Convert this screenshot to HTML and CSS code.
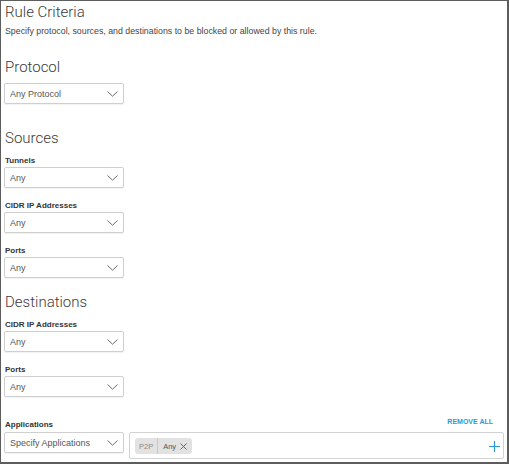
FILE: index.html
```html
<!DOCTYPE html>
<html>
<head>
<meta charset="utf-8">
<link rel="stylesheet" href="styles.css">
</head>
<body>
<div class="frame">
  <h1 class="title">Rule Criteria</h1>
  <p class="desc">Specify protocol, sources, and destinations to be blocked or allowed by this rule.</p>

  <h2 class="section">Protocol</h2>
  <div class="select"><span>Any Protocol</span><svg class="chev" width="11" height="6" viewBox="0 0 11 6"><polyline points="0.5,0.5 5.5,5.2 10.5,0.5" fill="none" stroke="#6a6a6a" stroke-width="1"/></svg></div>

  <h2 class="section sources">Sources</h2>
  <div class="field first">
    <div class="label">Tunnels</div>
    <div class="select"><span>Any</span><svg class="chev" width="11" height="6" viewBox="0 0 11 6"><polyline points="0.5,0.5 5.5,5.2 10.5,0.5" fill="none" stroke="#6a6a6a" stroke-width="1"/></svg></div>
  </div>
  <div class="field">
    <div class="label">CIDR IP Addresses</div>
    <div class="select"><span>Any</span><svg class="chev" width="11" height="6" viewBox="0 0 11 6"><polyline points="0.5,0.5 5.5,5.2 10.5,0.5" fill="none" stroke="#6a6a6a" stroke-width="1"/></svg></div>
  </div>
  <div class="field">
    <div class="label">Ports</div>
    <div class="select"><span>Any</span><svg class="chev" width="11" height="6" viewBox="0 0 11 6"><polyline points="0.5,0.5 5.5,5.2 10.5,0.5" fill="none" stroke="#6a6a6a" stroke-width="1"/></svg></div>
  </div>

  <h2 class="section dest">Destinations</h2>
  <div class="field first">
    <div class="label">CIDR IP Addresses</div>
    <div class="select"><span>Any</span><svg class="chev" width="11" height="6" viewBox="0 0 11 6"><polyline points="0.5,0.5 5.5,5.2 10.5,0.5" fill="none" stroke="#6a6a6a" stroke-width="1"/></svg></div>
  </div>
  <div class="field">
    <div class="label">Ports</div>
    <div class="select"><span>Any</span><svg class="chev" width="11" height="6" viewBox="0 0 11 6"><polyline points="0.5,0.5 5.5,5.2 10.5,0.5" fill="none" stroke="#6a6a6a" stroke-width="1"/></svg></div>
  </div>

  <div class="apps">
    <div class="label apps-label">Applications</div>
    <div class="remove">REMOVE ALL</div>
    <div class="select"><span>Specify Applications</span><svg class="chev" width="11" height="6" viewBox="0 0 11 6"><polyline points="0.5,0.5 5.5,5.2 10.5,0.5" fill="none" stroke="#6a6a6a" stroke-width="1"/></svg></div>
    <div class="tagbox">
      <div class="tag"><span class="tag-key">P2P</span><span class="tag-val">Any<svg class="x" width="7" height="7" viewBox="0 0 7 7"><path d="M0.5 0.5 L6.5 6.5 M6.5 0.5 L0.5 6.5" stroke="#666" stroke-width="1" fill="none"/></svg></span></div>
      <svg class="plus" width="11" height="11" viewBox="0 0 11 11"><path d="M5.5 0 V11 M0 5.5 H11" stroke="#2b9ad4" stroke-width="1.2" fill="none"/></svg>
    </div>
  </div>
</div>
</body>
</html>
```

FILE: styles.css
```css
html, body {
  margin: 0;
  padding: 0;
  background: #ffffff;
}

.frame {
  box-sizing: border-box;
  width: 509px;
  height: 464px;
  border-style: solid;
  border-color: #5d5d5d;
  border-width: 1px 2px 2px 1px;
  padding: 2px 0 0 3px;
  font-family: "Liberation Sans", Arial, sans-serif;
  color: #333;
  overflow: hidden;
}

.title,
.section {
  margin: 0;
  font-family: Roboto, "Liberation Sans", sans-serif;
  font-weight: 300;
  font-size: 15px;
  line-height: 18px;
  color: #3a3a3a;
  padding-left: 1px;
}

.desc {
  margin: 4px 0 0 1px;
  font-size: 8.8px;
  line-height: 12px;
  color: #444;
}

.section {
  margin-top: 21px;
  margin-bottom: 7px;
}

.section.sources {
  margin-top: 25px;
  margin-bottom: 0;
}

.section.dest {
  margin-top: 15px;
  margin-bottom: 0;
}

.field {
  margin-top: 13px;
}

.field.first {
  margin-top: 9px;
}

.label {
  font-size: 8px;
  font-weight: bold;
  line-height: 10px;
  margin-bottom: 1px;
  color: #333;
  padding-left: 1px;
}

.select {
  box-sizing: border-box;
  width: 120px;
  height: 21px;
  border: 1px solid #cfcfcf;
  border-radius: 2px;
  box-shadow: 0 1px 1px rgba(0, 0, 0, 0.06);
  display: flex;
  align-items: center;
  justify-content: space-between;
  padding: 0 5px 0 5px;
  font-size: 9px;
  color: #555;
  background: #fff;
}

.chev {
  display: block;
}

.apps {
  margin-top: 20px;
  display: grid;
  grid-template-columns: 120px 1fr;
  column-gap: 5px;
  row-gap: 2px;
  padding-right: 3px;
  align-items: end;
}

.apps-label {
  margin-bottom: 0;
}

.remove {
  justify-self: end;
  font-size: 7px;
  font-weight: bold;
  line-height: 10px;
  color: #2a9ad6;
  padding-right: 11px;
  margin-bottom: 3px;
}

.apps .select {
  align-self: start;
}

.tagbox {
  align-self: start;
  box-sizing: border-box;
  height: 27px;
  border: 1px solid #d2d2d2;
  border-radius: 2px;
  display: flex;
  align-items: center;
  justify-content: space-between;
  padding: 0 3px 0 5px;
}

.tag {
  display: flex;
  align-items: stretch;
  height: 16px;
  background: #e2e2e2;
  border-radius: 3px;
  font-size: 7.5px;
  color: #666;
  margin-top: 1px;
}

.tag-key {
  display: flex;
  align-items: center;
  padding: 0 4px 0 4px;
  border-right: 1px solid #c9c9c9;
  color: #888;
}

.tag-val {
  display: flex;
  align-items: center;
  gap: 4px;
  padding: 0 5px 0 5px;
  color: #555;
}

.x {
  display: block;
}

.plus {
  display: block;
  margin-top: 2px;
}
```
